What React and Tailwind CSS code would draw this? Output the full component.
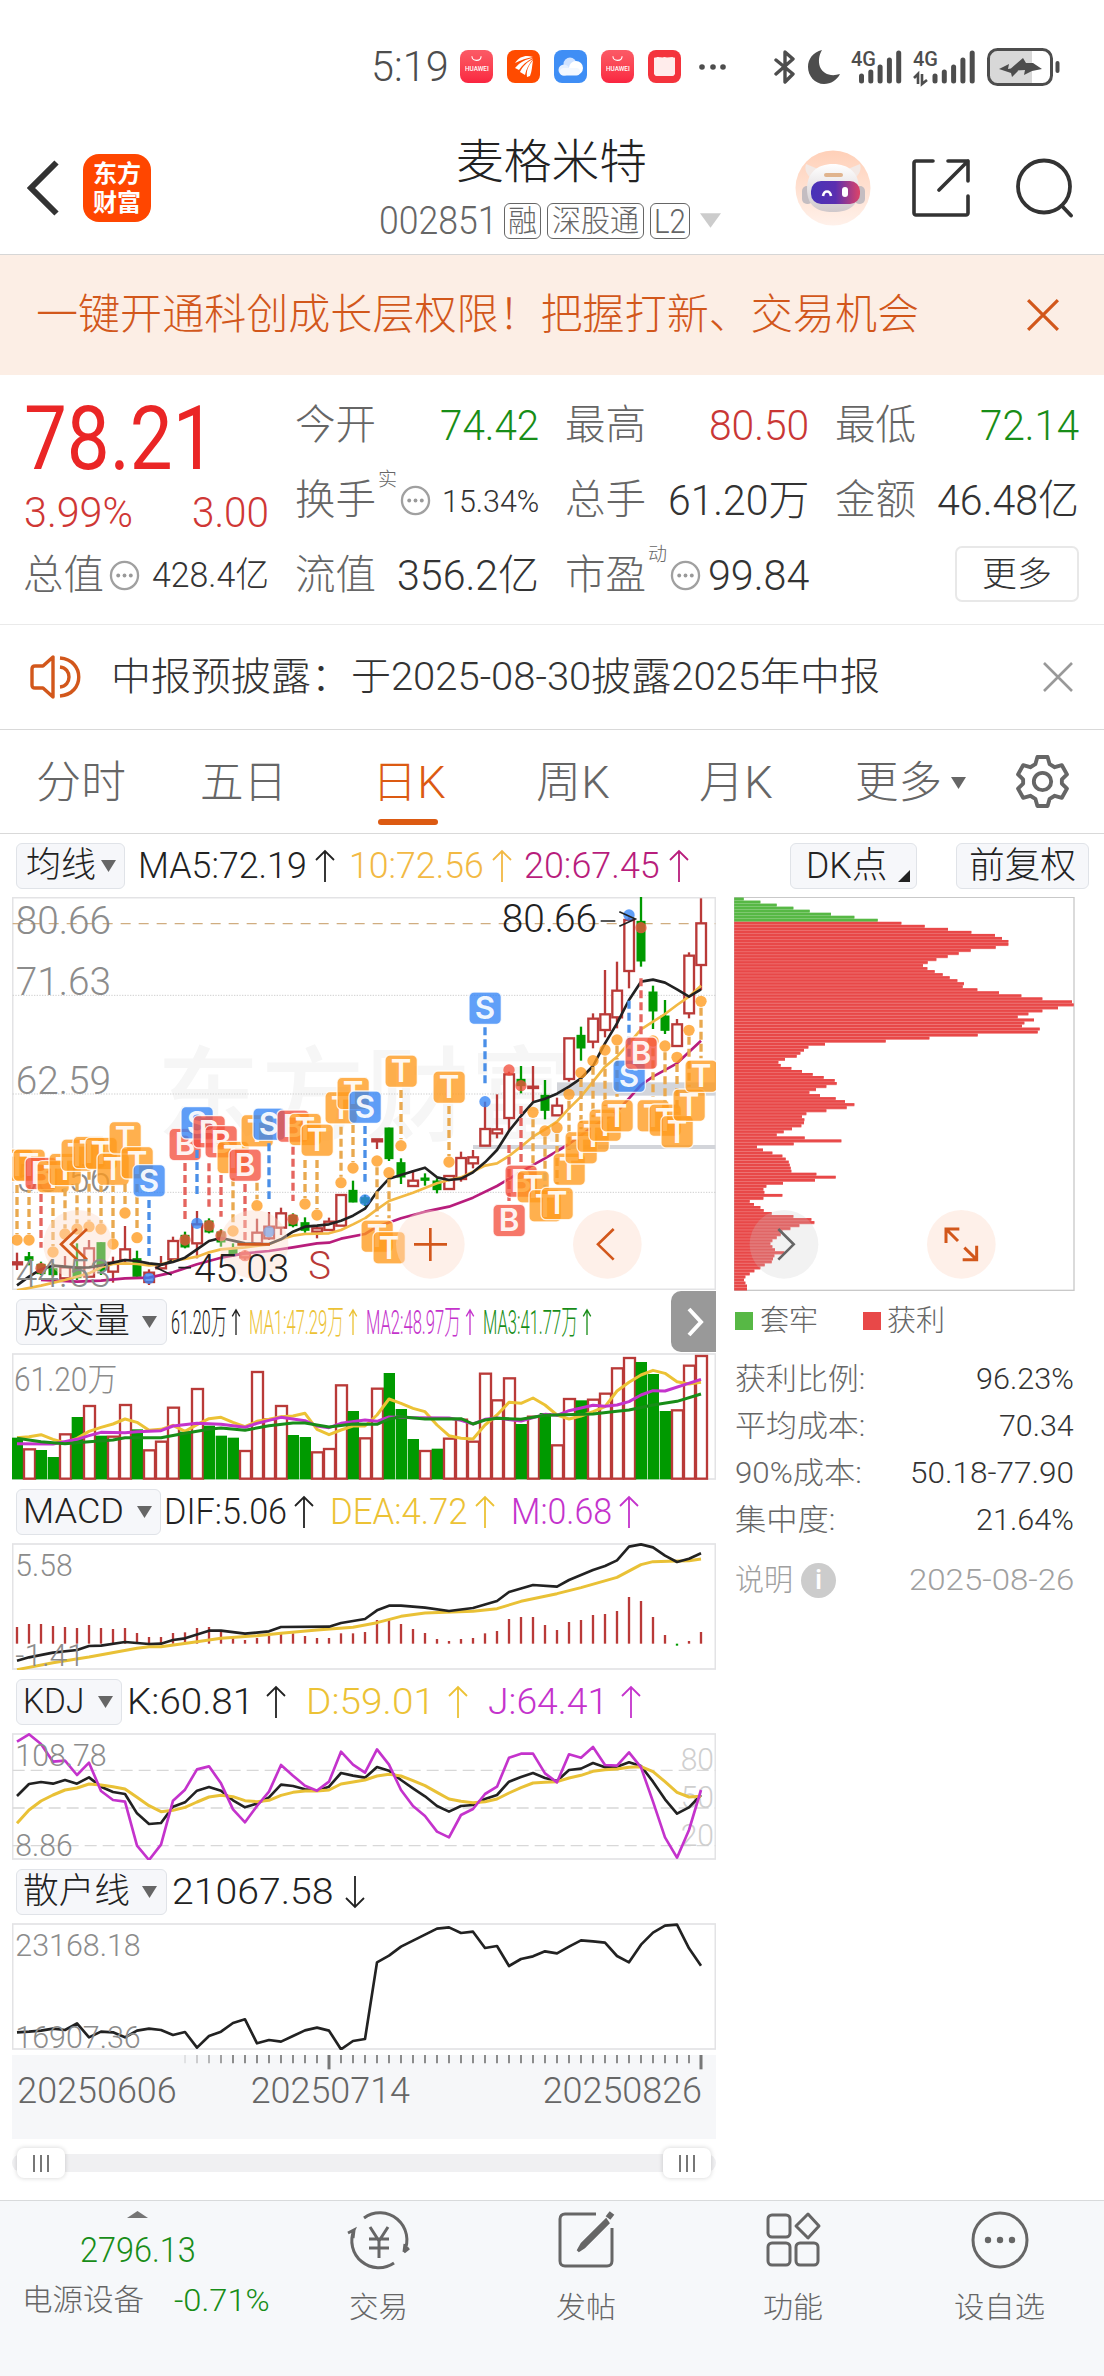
import React, { useLayoutEffect, useRef, useState } from 'react';

// All charts are drawn in a 3x unit space: 36 units per trading day.
const X = i => 51 + i * 36;

const RED = '#b93a38';
const GREEN = '#009a00';

// [kind, bodyTop, bodyBottom, high, low]
const candles = [
  ['r', 1297, 1303, 1268, 1320], ['g', 1279, 1290, 1266, 1306], ['g', 1302, 1330, 1295, 1335], ['g', 1315, 1333, 1300, 1340],
  ['r', 1312, 1345, 1278, 1345], ['g', 1310, 1342, 1240, 1350], ['r', 1255, 1340, 1230, 1340], ['g', 1237, 1320, 1237, 1335],
  ['r', 1298, 1325, 1280, 1358], ['r', 1258, 1290, 1188, 1300], ['g', 1285, 1338, 1262, 1342], ['r', 1328, 1356, 1318, 1365],
  ['r', 1303, 1315, 1278, 1320], ['r', 1233, 1288, 1220, 1295], ['g', 1215, 1250, 1205, 1255], ['r', 1183, 1240, 1143, 1285],
  ['g', 1172, 1205, 1165, 1210], ['g', 1205, 1235, 1198, 1250], ['g', 1255, 1274, 1240, 1280], ['r', 1270, 1282, 1262, 1290],
  ['r', 1208, 1240, 1166, 1245], ['r', 1190, 1225, 1146, 1230], ['r', 1150, 1193, 1133, 1215], ['g', 1155, 1186, 1150, 1192],
  ['g', 1177, 1200, 1162, 1208], ['r', 1195, 1205, 1190, 1225], ['r', 1175, 1200, 1163, 1200], ['r', 1095, 1187, 1095, 1187],
  ['g', 1080, 1115, 1052, 1117], ['g', 1102, 1118, 1095, 1128], ['r', 928, 934, 928, 957], ['g', 893, 985, 893, 993],
  ['g', 997, 1040, 985, 1062], ['r', 1052, 1068, 1020, 1070], ['g', 1043, 1050, 1030, 1067], ['g', 1052, 1078, 1045, 1090],
  ['r', 1038, 1077, 1038, 1077], ['r', 984, 1047, 965, 1055], ['r', 982, 1000, 960, 1015], ['r', 897, 947, 815, 947],
  ['r', 898, 910, 793, 925], ['r', 733, 864, 725, 905], ['g', 747, 766, 708, 790], ['r', 770, 774, 708, 815],
  ['g', 795, 840, 750, 868], ['r', 827, 856, 803, 856], ['r', 625, 747, 625, 755], ['g', 615, 653, 590, 692],
  ['r', 566, 635, 550, 655], ['r', 553, 600, 420, 622], ['r', 482, 562, 395, 595], ['r', 270, 423, 262, 475],
  ['g', 273, 392, 201, 410], ['g', 485, 542, 467, 597], ['g', 557, 600, 510, 612], ['r', 583, 648, 567, 648],
  ['r', 377, 550, 367, 565], ['r', 280, 405, 205, 480],
];

const ma5 = [1366, 1340, 1318, 1307, 1310, 1313, 1312, 1306, 1298, 1290, 1293, 1300, 1304, 1296, 1283, 1258, 1233, 1224, 1232, 1240, 1242, 1242, 1228, 1205, 1190, 1187, 1183, 1172, 1157, 1136, 1085, 1046, 1035, 1024, 1013, 1042, 1050, 1046, 1027, 997, 960, 903, 858, 817, 806, 791, 770, 745, 708, 640, 580, 510, 455, 449, 458, 478, 500, 478]
  .map((v, i) => [i, v]);
const ma10 = [[0, 1381], [2, 1367], [4, 1350], [6, 1330], [7, 1312], [8, 1302], [9, 1300], [10, 1302], [11, 1306], [12, 1303], [13, 1293], [14, 1287], [15, 1280], [16, 1267], [17, 1258], [19, 1252], [21, 1243], [22, 1228], [23, 1217], [24, 1212], [26, 1210], [27, 1200], [28, 1183], [29, 1165], [30, 1138], [31, 1113], [33, 1088], [35, 1060], [36, 1050], [37, 1042], [38, 1025], [39, 1007], [40, 1000], [41, 978], [42, 950], [43, 920], [44, 898], [45, 875], [46, 835], [47, 800], [48, 755], [49, 710], [50, 680], [51, 640], [52, 598], [53, 575], [54, 552], [55, 525], [56, 500], [57, 467]];
const ma20 = [[2, 1350], [5, 1355], [7, 1352], [9, 1345], [11, 1343], [13, 1327], [15, 1303], [17, 1283], [19, 1270], [21, 1263], [23, 1252], [25, 1240], [26, 1238], [27, 1226], [29, 1212], [30, 1190], [32, 1165], [34, 1145], [36, 1130], [38, 1103], [40, 1068], [42, 1025], [44, 985], [46, 942], [48, 890], [50, 845], [51, 805], [52, 765], [53, 740], [55, 700], [57, 632]];

// [day, badge, badgeY, dashFrom, dashTo, markerY]
const signals = [
  [0, 'T', 1005, 1065, 1212, 1230], [1, 'T', 1005, 1065, 1212, 1230], [2, 'B', 1030, 1092, 1253, 1315], [3, 'T', 1040, 1098, 1248, 1266],
  [4, 'T', 1018, 1075, 1195, 1212], [5, 'T', 975, 1060, 1180, 1197], [6, 'T', 967, 1025, 1172, 1190], [7, 'T', 970, 1062, 1180, 1197],
  [8, 'T', 1017, 1062, 1225, 1242], [9, 'T', 923, 1062, 1130, 1149], [10, 'T', 998, 1062, 1205, 1223], [11, 'S', 1052, 1110, 1278, 1345],
  [14, 'B', 943, 999, 1168, 1230], [15, 'S', 878, 960, 1103, 1180], [16, 'B', 905, 1000, 1130, 1187], [17, 'B', 935, 1035, 1160, 1217],
  [18, 'T', 982, 1045, 1185, 1203], [19, 'B', 1005, 1062, 1235, 1277], [20, 'T', 902, 1058, 1108, 1127], [21, 'S', 882, 940, 1107, 1205],
  [23, 'B', 888, 950, 1113, 1168], [24, 'T', 898, 990, 1104, 1122], [25, 'T', 930, 990, 1137, 1155], [27, 'T', 833, 890, 1040, 1058],
  [28, 'T', 790, 885, 996, 1014], [29, 'S', 831, 888, 1055, 1110], [30, 'T', 1218, 1012, 1160, 993], [31, 'T', 1253, 1048, 1165, 1028],
  [32, 'T', 723, 780, 928, 947], [36, 'T', 771, 828, 978, 996], [39, 'S', 534, 592, 760, 815], [41, 'B', 1171, 945, 1115, 720],
  [42, 'B', 1053, 828, 998, 767], [43, 'T', 1070, 868, 1015, 847], [44, 'T', 1127, 920, 1070, 903], [45, 'T', 1120, 912, 1062, 893],
  [46, 'T', 1017, 812, 960, 793], [47, 'T', 953, 747, 898, 728], [48, 'T', 918, 710, 862, 692], [49, 'T', 885, 680, 828, 660],
  [50, 'T', 857, 648, 800, 630], [51, 'S', 738, 512, 685, 255], [53, 'T', 857, 655, 800, 633], [52, 'B', 669, 445, 615, 293],
  [54, 'T', 870, 667, 815, 648], [55, 'T', 905, 702, 850, 682], [56, 'T', 825, 620, 770, 601], [57, 'T', 738, 533, 685, 514],
];
const signalColor = { T: '#ff9a1c', B: '#f4513f', S: '#3384f6' };
const dashColor = { T: '#e9a94f', B: '#e5655f', S: '#4a8fe8' };

const volumes = 'g443 r475 g480 g501 r430 g381 r345 g437 r437 r342 g418 r478 r452 r350 g425 r294 g407 g437 g443 r480 r243 r385 r345 g435 g441 r484 r474 r283 g363 r442 r293 g249 g357 g447 r480 g476 r443 r386 r452 r248 r328 r262 g402 r377 g369 r463 r324 g331 r326 r308 r232 r201 g216 g252 g363 r358 r224 r195'
  .split(' ');
const vol1 = [443, 440, 434, 448, 458, 445, 424, 412, 402, 387, 397, 421, 418, 406, 424, 404, 386, 382, 397, 410, 394, 388, 380, 378, 370, 418, 434, 420, 408, 408, 375, 327, 340, 355, 365, 405, 437, 445, 447, 405, 375, 337, 340, 324, 345, 375, 387, 378, 365, 350, 303, 277, 255, 241, 250, 275, 282, 277]
  .map((v, i) => [i, v]);
const vol2 = [[0, 461], [3, 462], [5, 448], [6, 437], [7, 427], [9, 428], [10, 425], [12, 422], [13, 408], [15, 400], [17, 403], [19, 412], [20, 400], [22, 382], [24, 392], [25, 408], [26, 413], [27, 400], [29, 390], [30, 394], [31, 381], [33, 383], [36, 384], [37, 391], [38, 402], [39, 388], [40, 384], [42, 393], [44, 373], [45, 376], [46, 362], [48, 346], [49, 349], [50, 345], [51, 335], [52, 315], [53, 302], [54, 303], [57, 268]];
const vol3 = [[0, 445], [2, 455], [4, 461], [6, 455], [8, 450], [9, 443], [12, 443], [14, 430], [16, 418], [17, 414], [19, 421], [21, 407], [23, 399], [24, 399], [26, 411], [28, 402], [30, 403], [31, 387], [32, 380], [34, 387], [37, 386], [38, 402], [39, 390], [40, 385], [42, 388], [44, 376], [48, 372], [50, 364], [51, 360], [53, 345], [55, 334], [57, 312]];

const macd = [1011, 1002, 1002, 1008, 1011, 1014, 1005, 1014, 1017, 1014, 1029, 1041, 1041, 1029, 1027, 1014, 1011, 1020, 1040, 1050, 1044, 1038, 1030, 1030, 1038, 1044, 1044, 1030, 1030, 1026, 990, 988, 1002, 1017, 1029, 1047, 1053, 1047, 1044, 1030, 1023, 987, 981, 981, 1005, 1020, 996, 990, 975, 972, 963, 921, 933, 981, 1035, 1067, 1053, 1026];
const dif = [[0, 1112], [1, 1102], [3, 1088], [5, 1080], [6, 1068], [7, 1067], [9, 1056], [11, 1062], [12, 1061], [13, 1050], [14, 1045], [16, 1022], [17, 1022], [19, 1031], [21, 1024], [22, 1011], [26, 1010], [27, 999], [29, 987], [30, 961], [31, 947], [32, 947], [34, 953], [36, 963], [38, 954], [40, 933], [41, 906], [43, 885], [45, 890], [46, 870], [48, 840], [49, 828], [50, 811], [51, 770], [52, 763], [53, 772], [54, 797], [55, 816], [56, 806], [57, 790]];
const dea = [[0, 1139], [3, 1118], [6, 1101], [10, 1075], [11, 1070], [12, 1070], [15, 1055], [17, 1045], [20, 1037], [22, 1030], [25, 1020], [28, 1012], [30, 998], [32, 979], [34, 969], [38, 964], [40, 956], [42, 934], [45, 911], [47, 893], [50, 862], [52, 824], [53, 815], [55, 813], [56, 812], [57, 807]];

const kLine = [348, 312, 306, 311, 300, 311, 292, 320, 336, 342, 400, 432, 429, 380, 367, 332, 321, 332, 361, 382, 371, 352, 314, 318, 328, 332, 320, 279, 287, 293, 261, 272, 300, 325, 349, 378, 395, 378, 375, 357, 345, 305, 291, 279, 294, 303, 270, 266, 249, 262, 260, 247, 258, 305, 358, 401, 382, 345]
  .map((v, i) => [i, v]);
const dLine = [430, 390, 363, 345, 330, 324, 312, 315, 320, 327, 352, 377, 395, 391, 382, 366, 351, 346, 350, 362, 365, 361, 346, 337, 333, 333, 330, 312, 306, 300, 288, 283, 288, 302, 317, 337, 357, 364, 368, 365, 357, 339, 323, 309, 307, 305, 294, 286, 274, 269, 267, 262, 260, 275, 305, 337, 351, 349]
  .map((v, i) => [i, v]);
const jLine = [185, 163, 192, 245, 242, 285, 248, 333, 360, 365, 497, 540, 494, 362, 329, 268, 259, 310, 388, 427, 378, 335, 255, 287, 317, 332, 305, 215, 254, 278, 208, 254, 330, 378, 408, 455, 472, 405, 387, 342, 320, 233, 221, 221, 280, 307, 223, 233, 201, 255, 257, 217, 262, 365, 472, 533, 450, 330]
  .map((v, i) => [i, v]);
const retail = [1057, 1055, 1052, 1046, 1050, 1030, 1072, 1055, 1057, 1072, 1052, 1046, 1050, 1065, 1056, 1103, 1068, 1055, 1029, 1018, 1090, 1080, 1085, 1068, 1051, 1043, 1052, 1108, 1083, 1077, 847, 827, 800, 782, 764, 746, 742, 759, 755, 804, 798, 858, 837, 829, 814, 820, 800, 781, 784, 788, 828, 847, 794, 758, 737, 734, 805, 857]
  .map((v, i) => [i, v]);

const chips = [132, 182, 231, 281, 330, 394, 464, 534, 605, 675, 745, 815, 886, 907, 926, 926, 888, 813, 777, 744, 710, 684, 670, 683, 705, 729, 750, 773, 793, 789, 833, 898, 965, 1028, 1117, 1122, 1075, 1028, 986, 954, 1003, 974, 967, 1020, 1014, 834, 689, 558, 376, 326, 313, 302, 291, 256, 236, 243, 275, 307, 339, 372, 405, 411, 380, 349, 329, 361, 408, 436, 464, 441, 380, 320, 307, 314, 313, 305, 277, 252, 231, 315, 425, 282, 172, 190, 218, 248, 258, 267, 270, 273, 275, 350, 408, 346, 250, 200, 191, 194, 248, 191, 150, 163, 182, 192, 216, 281, 335, 344, 299, 272, 248, 243, 231, 218, 212, 218, 226, 254, 224, 220, 216, 195, 182, 164, 150, 137, 133, 137, 142, 142];

// Squeezes a single line of text into a given pixel width.
function Fit({ w, className = '', children }) {
  const ref = useRef(null);
  const [scale, setScale] = useState(1);

  useLayoutEffect(() => {
    const natural = ref.current.offsetWidth;
    if (natural > 0) setScale(w / natural);
  }, [w, children]);

  return (
    <span className={`inline-flex shrink-0 ${className}`} style={{ width: w }}>
      <span ref={ref} className="inline-block whitespace-nowrap origin-left leading-none" style={{ transform: `scaleX(${scale})` }}>
        {children}
      </span>
    </span>
  );
}

function Line({ data, color, width = 8 }) {
  return <polyline points={data.map(([i, v]) => `${X(i)},${v}`).join(' ')} fill="none" stroke={color} strokeWidth={width} strokeLinejoin="round" />;
}

function ChartText({ x, y, w, size = 92, color = '#8c8c8c', children }) {
  return (
    <text x={x} y={y} textLength={w} lengthAdjust="spacingAndGlyphs" fontSize={size} fill={color} className="font-light">
      {children}
    </text>
  );
}

function SubChart({ top, children }) {
  return (
    <svg className="block w-[704px] h-[127px]" viewBox={`36 ${top} 2112 381`}>
      <rect x="38" y={top + 3} width="2108" height="375" fill="#fff" stroke="#e3e3e5" strokeWidth="5" />
      {children}
    </svg>
  );
}

function RoundButton({ x, y = 1243, gray, children }) {
  return (
    <g fill="none" stroke={gray ? '#666' : '#d2571b'} strokeWidth="8">
      <circle cx={x} cy={y} r="103" fill={gray ? '#c8c8c8' : '#fddccb'} fillOpacity={gray ? 0.24 : 0.42} stroke="none" />
      {children}
    </g>
  );
}

function KChart() {
  return (
    <svg className="block w-[704px] h-[393px]" viewBox="36 201 2112 1179">
      <rect x="38" y="203" width="2108" height="1175" fill="#fff" stroke="#e3e3e5" strokeWidth="5" />
      <text x="470" y="910" fontSize="310" fontWeight="500" fill="#f6f6f6" textLength="1250">东方财富</text>
      {[496, 792, 1087].map(y => (
        <line key={y} x1="38" x2="2146" y1={y} y2={y} stroke="#cfcfcf" strokeWidth="3" strokeDasharray="4 4" />
      ))}
      <line x1="38" x2="2146" y1="281" y2="281" stroke="#d0ad80" strokeWidth="4" strokeDasharray="30 24" />
      <rect x="1671" y="757" width="475" height="40" fill="#d3d5da" />
      <rect x="1419" y="945" width="727" height="12" fill="#d3d5da" />
      <ChartText x="47" y="313" w="286" size="119">80.66</ChartText>
      <ChartText x="47" y="494" w="286" size="119">71.63</ChartText>
      <ChartText x="47" y="792" w="286" size="119">62.59</ChartText>
      <ChartText x="47" y="1087" w="286" size="119">53.56</ChartText>
      {candles.map(([k, top, bottom, high, low], i) => (
        <g key={i} stroke={k === 'r' ? RED : GREEN} strokeWidth="7">
          <line x1={X(i)} x2={X(i)} y1={high} y2={low} />
          {k === 'r'
            ? <rect x={X(i) - 14} y={top} width="29" height={bottom - top} fill="#fff" />
            : <rect x={X(i) - 10} y={top + 3} width="20" height={bottom - top - 4} fill={GREEN} />}
        </g>
      ))}
      <Line data={ma20} color="#b81d7c" />
      <Line data={ma10} color="#f2b944" />
      <Line data={ma5} color="#222" />
      {signals.map(([i, type, y, from, to, marker]) => (
        <g key={i}>
          <line x1={X(i)} x2={X(i)} y1={from} y2={to} stroke={dashColor[type]} strokeWidth="10" strokeDasharray="24 12" />
          <circle cx={X(i)} cy={marker} r="17" fill={signalColor[type]} fillOpacity="0.78" />
          <rect x={X(i) - 48} y={y - 48} width="97" height="97" rx="15" fill={signalColor[type]} fillOpacity="0.78" stroke="#fff" strokeOpacity="0.8" strokeWidth="4" />
          <text x={X(i)} y={y + 33} fontSize="94" fontWeight="600" textAnchor="middle" fill="#fff" fillOpacity="0.92" fontFamily="Inter, sans-serif">{type}</text>
        </g>
      ))}
      <RoundButton x={233}>
        <path d="M231 1197l-48 46 48 46M261 1197l-48 46 48 46" />
      </RoundButton>
      <RoundButton x={762}>
        <path d="M712 1243h98" />
      </RoundButton>
      <RoundButton x={1291}>
        <path d="M1242 1243h99M1291 1194v99" />
      </RoundButton>
      <RoundButton x={1822}>
        <path d="M1841 1197l-47 46 47 46" />
      </RoundButton>
      <ChartText x="47" y="1370" w="286" size="119">44.53</ChartText>
      <ChartText x="1505" y="307" w="286" size="119" color="#222">80.66</ChartText>
      <path d="M1802 273h44M1858 245l48 22-48 22" fill="none" stroke="#222" strokeWidth="5" />
      <ChartText x="582" y="1355" w="286" size="119" color="#222">45.03</ChartText>
      <path d="M535 1313h38M515 1291l-46 22 46 22" fill="none" stroke="#222" strokeWidth="5" />
      <ChartText x="925" y="1346" w="68" size="119" color={RED}>S</ChartText>
    </svg>
  );
}

function ChipChart() {
  return (
    <svg className="block w-[341px] h-[394px]" viewBox="103 201 1023 1182">
      <rect x="104" y="202" width="1019" height="1179" fill="#fff" stroke="#c9c9c9" strokeWidth="4" />
      {chips.map((right, i) => (
        <g key={i} fill={i < 8 ? '#57b845' : '#e84848'}>
          <rect x="104" y={203 + i * 9.07} width={right - 104} height="9.2" fillOpacity="0.72" />
          <rect x="104" y={203 + i * 9.07} width={right - 104} height="7" />
        </g>
      ))}
      <RoundButton x={253} gray>
        <path d="M236 1197l46 46-46 46" />
      </RoundButton>
      <RoundButton x={785}>
        <path d="M779 1197h-40v42M739 1197l36 36M789 1289h42v-42M831 1289l-37-36" strokeWidth="9" />
      </RoundButton>
    </svg>
  );
}

function Caret({ className = '' }) {
  return <svg viewBox="0 0 15 12" className={`w-[15px] h-[12px] shrink-0 ${className}`}><path d="M0 0h15L7.500 12z" fill="#666" /></svg>;
}

function Arrow({ down }) {
  return (
    <svg viewBox="0 0 20 34" className="w-[20px] h-[34px] shrink-0" fill="none" stroke="currentColor" strokeWidth="1.800">
      {down ? <path d="M10 1v31M1 23l9 9 9-9" /> : <path d="M10 33V2M1 11l9-9 9 9" />}
    </svg>
  );
}

function Value({ w, gap = 'gap-[9px]', className = '', down, children }) {
  return (
    <span className={`flex shrink-0 items-center text-[37px] ${gap} ${className}`}>
      <Fit w={w}>{children}</Fit>
      <Arrow down={down} />
    </span>
  );
}

function Picker({ w, label, className = '' }) {
  return (
    <button className={`flex shrink-0 items-center justify-between h-[46px] rounded-md border border-[#e0e3e8] bg-[#f6f7fa] text-[35px] text-[#222] ${className}`}>
      <Fit w={w}>{label}</Fit>
      <Caret />
    </button>
  );
}

function VolValue({ w, className, children }) {
  return (
    <span className={`flex shrink-0 items-center gap-[4px] text-[34px] ${className}`}>
      <Fit w={w}>{children}</Fit>
      <svg viewBox="0 0 10 30" className="w-[10px] h-[28px]" fill="none" stroke="currentColor" strokeWidth="1.400"><path d="M5 29V2M1 9l4-7 4 7" /></svg>
    </span>
  );
}

function Dots({ className = '' }) {
  return (
    <svg viewBox="0 0 32 32" className={`size-[31px] shrink-0 ${className}`} fill="#999">
      <circle cx="16" cy="16" r="14" fill="none" stroke="#a0a0a0" strokeWidth="2.400" />
      <circle cx="9.500" cy="16" r="2" /><circle cx="16" cy="16" r="2" /><circle cx="22.500" cy="16" r="2" />
    </svg>
  );
}

function Bag() {
  return (
    <span className="flex flex-col items-center size-[33px] rounded-[8px] bg-linear-to-b from-[#fb5a66] to-[#fa2440] text-white">
      <svg viewBox="0 0 12 6" className="mt-[6px] w-[11px] h-[6px]" fill="none" stroke="#fff" strokeWidth="1.200"><path d="M1 0c0 6 10 6 10 0" /></svg>
      <span className="mt-[3px] flex"><Fit w={24} className="text-[8px] font-medium">HUAWEI</Fit></span>
    </span>
  );
}

function Signal({ data }) {
  const heights = [10, 14, 19, 26, 33];
  return (
    <svg viewBox="0 0 60 34" className="w-[60px] h-[34px] overflow-visible" fill="#4d4d4d">
      <text x="0" y="15.500" fontSize="21" fontWeight="500" textLength="25" lengthAdjust="spacingAndGlyphs">4G</text>
      {heights.map((h, i) => <rect key={h} x={(data ? 19.500 : 8) + i * 9.300} y={33.500 - h} width="5" height={h} rx="2.500" />)}
      {data && <path d="M1 28l4-4v10M9 24v10l5-4" fill="none" stroke="#4d4d4d" strokeWidth="2.600" />}
    </svg>
  );
}

function StatusBar() {
  return (
    <div className="flex items-center h-[134px] pl-[371px] pb-[1px] text-[#4d4d4d]">
      <Fit w={78} className="text-[43px]">5:19</Fit>
      <div className="ml-[11px] flex gap-[14px]">
        <Bag />
        <svg viewBox="0 0 33 33" className="size-[33px]">
          <rect width="33" height="33" rx="8" fill="#ff4b00" />
          <path d="M8 13C13 6 19 5 26 7 20 8 14 10 8 13zM8 18c5-6 11-9 18-10-6 3-11 7-14 12zM13 22c3-6 7-10 13-13-4 5-7 10-8 16zM20 27c-1-7 2-12 6-17-1 6-1 11-3 16z" fill="#fff" />
        </svg>
        <svg viewBox="0 0 33 33" className="size-[33px]">
          <rect width="33" height="33" rx="8" fill="#3f8ef5" />
          <circle cx="16" cy="14" r="6.500" fill="#cfe2ff" /><circle cx="10" cy="20" r="5.500" fill="#e4efff" /><circle cx="22" cy="18" r="7" fill="#fff" /><rect x="6" y="18" width="20" height="7.500" rx="3.700" fill="#f3f8ff" />
        </svg>
        <Bag />
        <svg viewBox="0 0 33 33" className="size-[33px]">
          <rect width="33" height="33" rx="8" fill="#f4333c" />
          <path d="M6 8c1-1 2 0 3-1 3 0 5 1 7.500 0 2.500 1 5 0 8 0 1 1 2 0 2.500 1v16c-1 1-1 2-2.500 2H8.500C7 26 7 25 6 24z" fill="#ffeceb" />
        </svg>
      </div>
      <svg viewBox="0 0 28 6" className="ml-[18px] w-[28px] h-[6px]" fill="#4d4d4d"><circle cx="3" cy="3" r="2.800" /><circle cx="14" cy="3" r="2.800" /><circle cx="24" cy="3" r="2.800" /></svg>
      <svg viewBox="0 0 22 34" className="ml-[47px] w-[22px] h-[34px]" fill="none" stroke="#4d4d4d" strokeWidth="3.400" strokeLinejoin="round" strokeLinecap="round">
        <path d="M2 10l17 14-8 8V2l8 7L2 24" />
      </svg>
      <svg viewBox="0 0 32 34" className="ml-[12px] w-[32px] h-[34px]" fill="#4d4d4d"><path d="M14 0C5 2 0 9 0 17c0 9 7 17 16 17 7 0 13-4 16-10-9 3-17 0-20-7-2-6-1-12 2-17z" /></svg>
      <span className="ml-[11px] flex"><Signal /></span>
      <span className="ml-[2px] flex"><Signal data /></span>
      <svg viewBox="0 0 74 38" className="ml-[14px] w-[74px] h-[38px]">
        <path d="M11 3h34v32H11c-5 0-8-3-8-8V11c0-5 3-8 8-8z" fill="#d8d8d8" />
        <rect x="1.500" y="1.500" width="63" height="35" rx="9" fill="none" stroke="#4d4d4d" strokeWidth="3" />
        <rect x="68.500" y="13" width="4" height="12" rx="2" fill="#4d4d4d" />
        <path d="M12 21l10-5-1 5 11-2-1 4-6 6-1-4zM21 23l15-13 3 5 7 0 9 6-10 2-8 4 1-5z" fill="#4d4d4d" />
      </svg>
    </div>
  );
}

function Robot() {
  return (
    <svg viewBox="0 0 76 76" className="size-[76px] shrink-0">
      <defs>
        <linearGradient id="halo" x1="0" y1="0" x2="0" y2="1"><stop offset="0" stopColor="#ffd0b8" /><stop offset="1" stopColor="#fff1ea" /></linearGradient>
        <linearGradient id="visor" x1="0" y1="0" x2="1" y2="0"><stop offset="0" stopColor="#4733b8" /><stop offset="0.500" stopColor="#5a2fb0" /><stop offset="1" stopColor="#dd4468" /></linearGradient>
        <linearGradient id="shell" x1="0" y1="0" x2="0" y2="1"><stop offset="0" stopColor="#fff" /><stop offset="1" stopColor="#cfc8cb" /></linearGradient>
      </defs>
      <circle cx="38" cy="38" r="37.500" fill="url(#halo)" />
      <path d="M11 14l12 5-6 10c-5-4-8-9-6-15zM65 14l-12 5 6 10c5-4 8-9 6-15z" fill="#f3e9e5" />
      <rect x="7" y="36" width="11" height="18" rx="5" fill="#c4bdc1" /><rect x="59" y="36" width="11" height="18" rx="5" fill="#c4bdc1" />
      <path d="M38 14c16 0 26 9 26 25 0 16-9 23-26 23S12 55 12 39c0-16 10-25 26-25z" fill="url(#shell)" />
      <rect x="29" y="23" width="19" height="4" rx="2" fill="#e0b48e" />
      <rect x="16" y="31" width="49" height="23" rx="10" fill="url(#visor)" />
      <path d="M28 46c1-6 7-6 8 0" fill="none" stroke="#fff" strokeWidth="2.600" /><rect x="47" y="37" width="6" height="10" rx="3" fill="#fff" />
    </svg>
  );
}

function Header() {
  return (
    <header className="flex items-center h-[121px] pl-[27px] pb-[12px] border-b border-[#d6d6d6]">
      <svg viewBox="0 0 32 56" className="w-[32px] h-[56px]" fill="none" stroke="#333" strokeWidth="6"><path d="M29.500 2.500L4 28l25.500 25.500" /></svg>
      <div className="ml-[24px] flex flex-col items-center justify-center gap-[5px] size-[68px] rounded-[16px] bg-[#ff4600] text-white text-[24px] font-bold">
        <Fit w={48}>东方</Fit>
        <Fit w={48}>财富</Fit>
      </div>
      <div className="ml-[228px] flex flex-col items-center w-[342px]">
        <Fit w={191} className="text-[47px] text-[#222] ml-[2px]">麦格米特</Fit>
        <div className="mt-[18px] flex items-center h-[36px] w-full text-[#666]">
          <Fit w={118} className="text-[38px]">002851</Fit>
          <span className="ml-[7px] flex items-center h-[36px] px-[3px] rounded-[6px] border border-[#666] text-[30px]"><Fit w={29}>融</Fit></span>
          <span className="ml-[6px] flex items-center h-[36px] px-[4px] rounded-[6px] border border-[#666] text-[30px]"><Fit w={87}>深股通</Fit></span>
          <span className="ml-[6px] flex items-center h-[36px] px-[3px] rounded-[6px] border border-[#666] text-[34px]"><Fit w={32}>L2</Fit></span>
          <svg viewBox="0 0 22 15" className="ml-[10px] w-[22px] h-[15px]"><path d="M0 0h22L11 15z" fill="#ccc" /></svg>
        </div>
      </div>
      <div className="ml-[74px] flex items-center">
        <Robot />
        <svg viewBox="0 0 58 58" className="ml-[41px] w-[58px] h-[58px]" fill="none" stroke="#333" strokeWidth="3.600" strokeLinecap="round" strokeLinejoin="round">
          <path d="M21 2H4c-1 0-2 1-2 2v50c0 1 1 2 2 2h50c1 0 2-1 2-2V37M36 2h20v20M56 2L27 31" />
        </svg>
        <svg viewBox="0 0 60 60" className="ml-[44px] w-[60px] h-[60px]" fill="none" stroke="#333" strokeWidth="3.800" strokeLinecap="round">
          <circle cx="30" cy="28.500" r="26" /><path d="M48 48l9 9.500" />
        </svg>
      </div>
    </header>
  );
}

function Stat({ label, w, labelW = 81, extra, size = 'text-[42px]', color = 'text-[#333]', className = '', children }) {
  return (
    <div className={`flex items-center justify-between h-[75px] ${className}`}>
      <span className="relative flex items-center text-[#666] text-[41px]">
        <Fit w={labelW}>{label}</Fit>
        {extra !== undefined && <Dots className={extra ? 'ml-[24px]' : 'ml-[5px]'} />}
        {extra && <span className="absolute left-[83px] -top-[10px] text-[19px] leading-none">{extra}</span>}
      </span>
      <Fit w={w} className={`${size} ${color}`}>{children}</Fit>
    </div>
  );
}

function Quote() {
  return (
    <section className="grid grid-cols-[243px_244px_244px_244px] gap-x-[26px] h-[250px] pt-[13px] pl-[26px] border-b border-[#eaeaea]">
      <div>
        <div className="flex items-center h-[100px] text-[#ea2626]"><Fit w={192} className="-ml-[2px] text-[89px] font-normal">78.21</Fit></div>
        <div className="flex items-center justify-between h-[50px] text-[42px] text-[#cf3735]">
          <Fit w={109} className="-ml-[2px]">3.99%</Fit>
          <Fit w={77}>3.00</Fit>
        </div>
        <Stat label="总值" w={117} extra="" size="text-[35px]" className="-ml-[3px]">428.4亿</Stat>
      </div>
      <div>
        <Stat label="今开" w={99} color="text-[#188d18]">74.42</Stat>
        <Stat label="换手" w={97} extra="实" size="text-[32px]">15.34%</Stat>
        <Stat label="流值" w={142}>356.2亿</Stat>
      </div>
      <div>
        <Stat label="最高" w={100} color="text-[#c93735]">80.50</Stat>
        <Stat label="总手" w={141}>61.20万</Stat>
        <Stat label="市盈" w={101} extra="动">99.84</Stat>
      </div>
      <div>
        <Stat label="最低" w={99} color="text-[#188d18]">72.14</Stat>
        <Stat label="金额" w={142}>46.48亿</Stat>
        <div className="flex items-center justify-end h-[72px]">
          <button className="flex items-center justify-center w-[124px] h-[56px] rounded-[7px] border-2 border-[#e8e8e8] text-[34px] text-[#333]"><Fit w={70}>更多</Fit></button>
        </div>
      </div>
    </section>
  );
}

function Tabs() {
  return (
    <nav className="flex items-start h-[104px] pl-[36px] border-b border-[#d9d9d9] text-[44px] text-[#666]">
      <span className="mt-[31px] flex"><Fit w={90}>分时</Fit></span>
      <span className="mt-[31px] ml-[74px] flex"><Fit w={87}>五日</Fit></span>
      <span className="mt-[31px] ml-[85px] flex flex-col items-start text-[#dc5a12]">
        <Fit w={74}>日K</Fit>
        <span className="mt-[14px] ml-[6px] w-[60px] h-[6px] rounded-full bg-[#dc5a12]" />
      </span>
      <span className="mt-[31px] ml-[90px] flex"><Fit w={74}>周K</Fit></span>
      <span className="mt-[31px] ml-[89px] flex"><Fit w={74}>月K</Fit></span>
      <span className="mt-[31px] ml-[82px] flex items-center gap-[9px]">
        <Fit w={87}>更多</Fit>
        <Caret />
      </span>
      <svg viewBox="0 0 52 52" className="mt-[25px] ml-[50px] size-[53px]" fill="none" stroke="#666" strokeWidth="3.800" strokeLinejoin="round">
        <path d="M21 2h10l2 7 5 3 7-2 5 9-5 5v4l5 5-5 9-7-2-5 3-2 7H21l-2-7-5-3-7 2-5-9 5-5v-4l-5-5 5-9 7 2 5-3z" />
        <circle cx="26" cy="26" r="8.500" />
      </svg>
    </nav>
  );
}

function Axis() {
  return (
    <div className="mt-[5px] w-[704px] h-[84px] bg-[#f6f7f9]">
      <svg viewBox="36 1125 2112 252" className="block w-[704px] h-[84px]">
        {Array.from({ length: 44 }, (_, n) => n + 14).map(i => (
          <line key={i} x1={X(i)} x2={X(i)} y1="1125" y2={i === 26 || i === 57 ? 1168 : 1150} stroke="#777" strokeOpacity={Math.min(1, (i - 13) / 5)} strokeWidth={i === 26 || i === 57 ? 9 : 5} />
        ))}
        <ChartText x="52" y="1269" w="478" size="112" color="#666">20250606</ChartText>
        <ChartText x="752" y="1269" w="478" size="112" color="#666">20250714</ChartText>
        <ChartText x="1628" y="1269" w="478" size="112" color="#666">20250826</ChartText>
      </svg>
    </div>
  );
}

function Handle({ className }) {
  return (
    <span className={`col-start-1 row-start-1 flex items-center justify-center gap-[5px] w-[48px] h-[30px] rounded-[7px] bg-white shadow-[0_0_5px_rgba(0,0,0,0.18)] ${className}`}>
      <i className="w-[2px] h-[17px] bg-[#777]" /><i className="w-[2px] h-[17px] bg-[#777]" /><i className="w-[2px] h-[17px] bg-[#777]" />
    </span>
  );
}

function ChipStats() {
  const rows = [
    ['获利比例:', 130, '96.23%', 98],
    ['平均成本:', 130, '70.34', 75],
    ['90%成本:', 127, '50.18-77.90', 164],
    ['集中度:', 100, '21.64%', 98],
  ];
  return (
    <>
      <div className="flex items-center h-[60px] text-[29px] text-[#666]">
        <span className="ml-px size-[18px] bg-[#57b845]" />
        <Fit w={58} className="ml-[7px]">套牢</Fit>
        <span className="ml-[45px] size-[18px] bg-[#e84848]" />
        <Fit w={58} className="ml-[6px]">获利</Fit>
      </div>
      <div className="mt-[4px] pl-px pr-[1px] text-[30px]">
        {rows.map(([label, lw, value, vw]) => (
          <div key={label} className="flex items-center justify-between h-[47px] text-[#333]">
            <Fit w={lw} className="text-[#666]">{label}</Fit>
            <Fit w={vw}>{value}</Fit>
          </div>
        ))}
        <div className="mt-[13px] flex items-center h-[48px] text-[#a0a0a0]">
          <Fit w={58}>说明</Fit>
          <span className="ml-[8px] flex items-center justify-center size-[35px] rounded-full bg-[#ccc] text-white text-[28px] font-medium leading-none">i</span>
          <Fit w={165} className="ml-auto">2025-08-26</Fit>
        </div>
      </div>
    </>
  );
}

function Charts() {
  return (
    <section className="flex h-[1366px] pl-[12px]">
      <div className="w-[704px]">
        <div className="flex items-center h-[63px] pl-[4px]">
          <Picker w={70} label="均线" className="w-[109px] pl-[9px] pr-[8px]" />
          <Value w={169} className="ml-[13px] text-[#222]" gap="gap-[8px]">MA5:72.19</Value>
          <Value w={135} className="ml-[14px] text-[#f2b944]" gap="gap-[8px]">10:72.56</Value>
          <Value w={136} className="ml-[12px] text-[#b81d7c]" gap="gap-[9px]">20:67.45</Value>
        </div>
        <KChart />
        <div className="flex items-center h-[63px] pl-[4px]">
          <Picker w={107} label="成交量" className="w-[151px] pl-[6px] pr-[9px]" />
          <VolValue w={56} className="ml-[4px] text-[#222]">61.20万</VolValue>
          <VolValue w={95} className="ml-[8px] text-[#ecc235]">MA1:47.29万</VolValue>
          <VolValue w={95} className="ml-[8px] text-[#c433cc]">MA2:48.97万</VolValue>
          <VolValue w={95} className="ml-[8px] text-[#188d18]">MA3:41.77万</VolValue>
          <button className="ml-auto flex items-center justify-center w-[45px] h-[61px] shrink-0 rounded-l-[10px] bg-[#999]">
            <svg viewBox="0 0 18 30" className="ml-[5px] w-[18px] h-[30px]" fill="none" stroke="#fff" strokeWidth="4"><path d="M2 2l12 13L2 28" /></svg>
          </button>
        </div>
        <SubChart top={189}>
          {volumes.map((v, i) => {
            const y = Number(v.slice(1));
            return v[0] === 'r'
              ? <rect key={i} x={X(i) - 15} y={y + 3} width="33" height={563 - y} fill="#fff" stroke={RED} strokeWidth="7" />
              : <rect key={i} x={X(i) - 16} y={y} width="34" height={568 - y} fill={GREEN} />;
          })}
          <Line data={vol1} color="#ecc235" width={9} />
          <Line data={vol2} color="#c433cc" width={9} />
          <Line data={vol3} color="#188d18" width={9} />
          <ChartText x="42" y="304" w="310" size="98">61.20万</ChartText>
        </SubChart>
        <div className="flex items-center h-[63px] pl-[4px]">
          <Picker w={101} label="MACD" className="w-[145px] pl-[6px] pr-[8px]" />
          <Value w={123} className="ml-[3px] text-[#222]" gap="gap-[7px]">DIF:5.06</Value>
          <Value w={138} className="ml-[16px] text-[#ecc235]" gap="gap-[7px]">DEA:4.72</Value>
          <Value w={101} className="ml-[16px] text-[#c433cc]" gap="gap-[7px]">M:0.68</Value>
        </div>
        <SubChart top={759}>
          {macd.map((y, i) => (
            <line key={i} x1={X(i)} x2={X(i)} y1="1061" y2={y} stroke={y > 1061 ? GREEN : RED} strokeWidth="7" />
          ))}
          <Line data={dea} color="#e9c136" width={9} />
          <Line data={dif} color="#222" />
          <ChartText x="46" y="857" w="172">5.58</ChartText>
          <ChartText x="46" y="1127" w="208">-1.41</ChartText>
        </SubChart>
        <div className="flex items-center h-[63px] pl-[4px]">
          <Picker w={61} label="KDJ" className="w-[106px] pl-[6px] pr-[8px]" />
          <Value w={127} className="ml-[5px] text-[#222]" gap="gap-[12px]">K:60.81</Value>
          <Value w={129} className="ml-[20px] text-[#ecc235]" gap="gap-[13px]">D:59.01</Value>
          <Value w={120} className="ml-[20px] text-[#c433cc]" gap="gap-[13px]">J:64.41</Value>
        </div>
        <SubChart top={159}>
          {[271, 384, 497].map(y => (
            <line key={y} x1="38" x2="2146" y1={y} y2={y} stroke="#d8d8d8" strokeWidth="4" strokeDasharray="36 18" />
          ))}
          <ChartText x="2042" y="270" w="100" color="#cfcfcf">80</ChartText>
          <ChartText x="2042" y="384" w="100" color="#cfcfcf">50</ChartText>
          <ChartText x="2042" y="497" w="100" color="#cfcfcf">20</ChartText>
          <Line data={kLine} color="#222" />
          <Line data={dLine} color="#e9c136" width={9} />
          <Line data={jLine} color="#c433cc" />
          <ChartText x="46" y="258" w="274">108.78</ChartText>
          <ChartText x="46" y="528" w="172">8.86</ChartText>
        </SubChart>
        <div className="flex items-center h-[63px] pl-[4px]">
          <Picker w={107} label="散户线" className="w-[151px] pl-[6px] pr-[9px]" />
          <Value w={162} className="ml-[5px] text-[#222]" gap="gap-[11px]" down>21067.58</Value>
        </div>
        <SubChart top={729}>
          <Line data={retail} color="#222" />
          <ChartText x="46" y="828" w="376">23168.18</ChartText>
          <ChartText x="46" y="1104" w="376">16907.36</ChartText>
        </SubChart>
        <Axis />
        <div className="mt-[9px] grid items-center h-[30px]">
          <span className="col-start-1 row-start-1 h-[18px] rounded-full bg-[#f0f0f2]" />
          <Handle className="ml-[5px]" />
          <Handle className="mr-[5px] justify-self-end" />
        </div>
      </div>
      <div className="ml-[18px] w-[355px]">
        <div className="flex items-center h-[63px] pl-[56px]">
          <button className="flex shrink-0 items-center w-[127px] h-[46px] pl-[15px] rounded-md border border-[#e0e3e8] bg-[#f6f7fa] text-[36px] text-[#222]">
            <Fit w={81}>DK点</Fit>
            <svg viewBox="0 0 12 12" className="ml-[11px] mt-[20px] size-[12px]"><path d="M12 0v12H0z" fill="#222" /></svg>
          </button>
          <button className="ml-[39px] flex shrink-0 items-center justify-center w-[133px] h-[46px] rounded-md border border-[#e0e3e8] bg-[#f6f7fa] text-[36px] text-[#222]">
            <Fit w={107}>前复权</Fit>
          </button>
        </div>
        <ChipChart />
        <div className="w-[341px]"><ChipStats /></div>
      </div>
    </section>
  );
}

function NavItem({ label, w, children }) {
  return (
    <button className="flex flex-col items-center w-[207px] pt-[9px] text-[29px] text-[#666]">
      <svg viewBox="0 0 64 60" className="w-[64px] h-[60px]" fill="none" stroke="#666" strokeWidth="3">{children}</svg>
      <Fit w={w} className="mt-[24px]">{label}</Fit>
    </button>
  );
}

function BottomBar() {
  return (
    <footer className="flex h-[176px] border-t border-[#d8dadb] bg-[#f6f8fa]">
      <div className="flex flex-col items-center w-[275px] pt-[10px]">
        <svg viewBox="0 0 21 7" className="w-[21px] h-[7px]"><path d="M0 7h21L10.500 0z" fill="#757575" /></svg>
        <Fit w={116} className="mt-[15px] text-[35px] text-[#188d18]">2796.13</Fit>
        <div className="mt-[16px] flex items-center text-[30px] text-[#666]">
          <Fit w={122} className="ml-[16px]">电源设备</Fit>
          <Fit w={96} className="ml-[30px] text-[32px] text-[#188d18]">-0.71%</Fit>
        </div>
      </div>
      <NavItem label="交易" w={59}>
        <path d="M17 8A27 27 0 0 1 57 42l5-4M57 42l1-8M47 53A27 27 0 0 1 7 20L1 23M7 20l-1 8" />
        <path d="M23 17l9 14 9-14M32 31v17M22 29h20M22 38h20" />
      </NavItem>
      <NavItem label="发帖" w={60}>
        <path d="M42 4H11c-3 0-5 2-5 5v42c0 3 2 5 5 5h42c3 0 5-2 5-5V18" />
        <path d="M52 10L28 34l-4 7 6-4 24-24z" fill="#666" /><path d="M54 8l4-5" strokeWidth="6" />
      </NavItem>
      <NavItem label="功能" w={60}>
        <rect x="7" y="5" width="22" height="22" rx="4" /><rect x="7" y="33" width="22" height="22" rx="4" /><rect x="35" y="33" width="22" height="22" rx="4" />
        <path d="M47 4l11 12-11 12-12-12z" strokeLinejoin="round" />
      </NavItem>
      <NavItem label="设自选" w={91}>
        <circle cx="32" cy="30" r="27" />
        <g fill="#666" stroke="none"><circle cx="20" cy="30" r="3.200" /><circle cx="32" cy="30" r="3.200" /><circle cx="44" cy="30" r="3.200" /></g>
      </NavItem>
    </footer>
  );
}

export default function App() {
  return (
    <div className="w-[1104px] h-[2376px] overflow-hidden bg-white font-light font-['Roboto','Noto_Sans_CJK_SC',sans-serif]">
      <StatusBar />
      <Header />
      <div className="flex items-center justify-between h-[120px] pl-[36px] pr-[44px] bg-[#fceee5] text-[42px] text-[#d2571b]">
        <Fit w={883}>一键开通科创成长层权限！把握打新、交易机会</Fit>
        <svg viewBox="0 0 32 32" className="size-[34px]" fill="none" stroke="#d2571b" strokeWidth="3"><path d="M2 2l28 28M30 2L2 30" /></svg>
      </div>
      <Quote />
      <div className="flex items-center h-[105px] pl-[30px] pr-[31px] border-b border-[#d9d9d9] text-[39px] text-[#333]">
        <svg viewBox="0 0 52 44" className="w-[52px] h-[44px]" fill="none" stroke="#d2571b" strokeWidth="3.400" strokeLinejoin="round">
          <path d="M23 2v40L13 33H5c-2 0-3-1-3-3V14c0-2 1-3 3-3h8z" /><path d="M30 3c25 2 25 36 0 38M30 12c12 1 12 19 0 20" />
        </svg>
        <Fit w={769} className="ml-[29px]">中报预披露：于2025-08-30披露2025年中报</Fit>
        <svg viewBox="0 0 30 30" className="ml-auto size-[30px]" fill="none" stroke="#999" strokeWidth="2.600"><path d="M1 1l28 28M29 1L1 29" /></svg>
      </div>
      <Tabs />
      <Charts />
      <BottomBar />
    </div>
  );
}
